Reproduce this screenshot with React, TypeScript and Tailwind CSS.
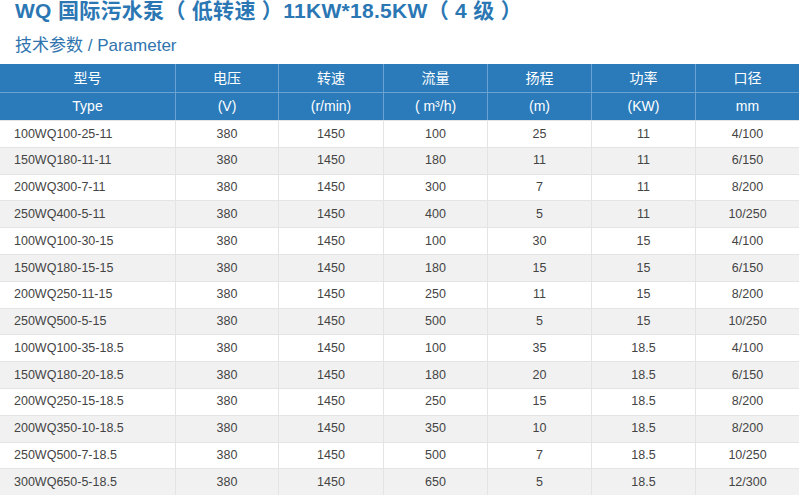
const rows = [
["100WQ100-25-11","380","1450","100","25","11","4/100"],
["150WQ180-11-11","380","1450","180","11","11","6/150"],
["200WQ300-7-11","380","1450","300","7","11","8/200"],
["250WQ400-5-11","380","1450","400","5","11","10/250"],
["100WQ100-30-15","380","1450","100","30","15","4/100"],
["150WQ180-15-15","380","1450","180","15","15","6/150"],
["200WQ250-11-15","380","1450","250","11","15","8/200"],
["250WQ500-5-15","380","1450","500","5","15","10/250"],
["100WQ100-35-18.5","380","1450","100","35","18.5","4/100"],
["150WQ180-20-18.5","380","1450","180","20","18.5","6/150"],
["200WQ250-15-18.5","380","1450","250","15","18.5","8/200"],
["200WQ350-10-18.5","380","1450","350","10","18.5","8/200"],
["250WQ500-7-18.5","380","1450","500","7","18.5","10/250"],
["300WQ650-5-18.5","380","1450","650","5","18.5","12/300"],
];
const h1 = ["型号","电压","转速","流量","扬程","功率","口径"];
const h2 = ["Type","(V)","(r/min)","( m³/h)","(m)","(KW)","mm"];
const cols = "grid grid-cols-[175px_103px_105px_104px_104px_104px_104px]";
export default function App() {
  return (
    <div className="w-[800px] h-[495px] overflow-hidden bg-white" style={{fontFamily:'"Liberation Sans","Noto Sans CJK SC",sans-serif'}}>
      <div className="pl-[15px] h-[30px] leading-[26px] text-[21px] font-bold text-[#2b77b4] -mt-[2px] tracking-[0.3px]">WQ 国际污水泵（ 低转速 ）11KW*18.5KW（ 4 级 ）</div>
      <div className="pl-[15px] h-[36px] leading-[36px] text-[17px] text-[#2f74ae]">技术参数 / Parameter</div>
      <div className="w-[799px]">
        {[h1,h2].map((h,i)=>(
          <div key={i} className={cols + " h-[28px] bg-[#2b7bba] text-white text-[14px]"}>
            {h.map((c,j)=>(<div key={j} className={"flex items-center justify-center " + (j>0?"border-l border-[#6aa3d1] ":"") + (i===1?"border-t border-[#6aa3d1]":"")}>{c}</div>))}
          </div>
        ))}
        {rows.map((r,i)=>(
          <div key={i} className={cols + " h-[26.8px] text-[12.5px] text-[#444] " + (i%2?"bg-[#f1f1f1]":"bg-white")}>
            {r.map((c,j)=>(<div key={j} className={"flex items-center border-t border-[#e4e4e4] " + (j===0?"pl-[14px]":"justify-center border-l")}>{c}</div>))}
          </div>
        ))}
      </div>
    </div>
  );
}
